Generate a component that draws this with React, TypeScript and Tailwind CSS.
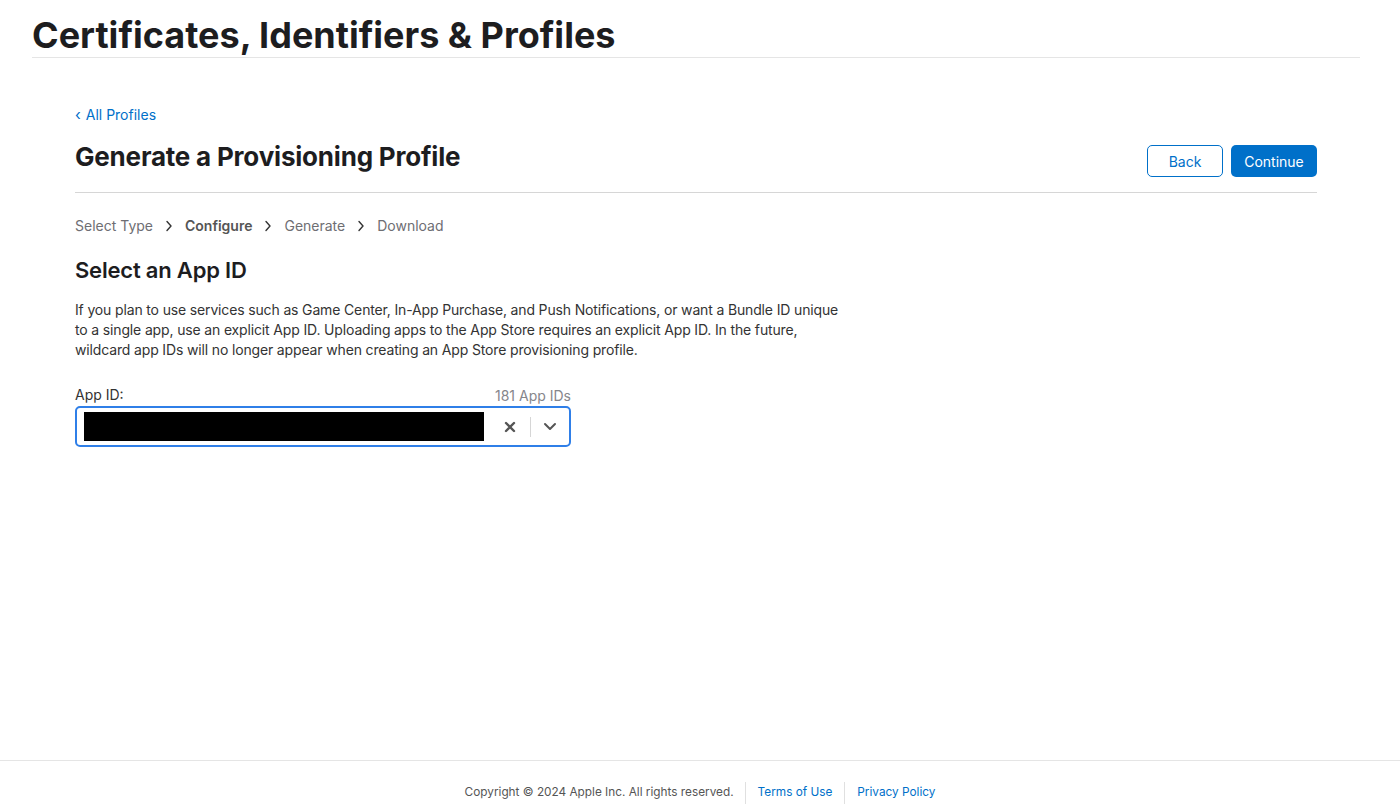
import React from 'react';

const steps = [
  { label: 'Select Type', active: false },
  { label: 'Configure', active: true },
  { label: 'Generate', active: false },
  { label: 'Download', active: false },
];

const Chevron = () => (
  <svg width="8" height="12" viewBox="0 0 8 12" className="mx-[12px] text-[#333]">
    <path d="M2 1.5 L6 6 L2 10.5" fill="none" stroke="currentColor" strokeWidth="1.4" strokeLinecap="round" strokeLinejoin="round" />
  </svg>
);

export default function App() {
  return (
    <div className="min-h-[807px] flex flex-col bg-white text-[#1d1d1f]" style={{ fontFamily: 'Inter, "Helvetica Neue", Arial, sans-serif' }}>
      {/* Top header */}
      <div className="px-8">
        <h1 className="text-[36px] font-bold leading-none pt-[17px] pb-[4px] border-b border-[#e5e5e5] w-[1328px]">
          Certificates, Identifiers &amp; Profiles
        </h1>
      </div>

      {/* Main content */}
      <main className="flex-1 pl-[75px] pr-[83px] pt-[46px]">
        <a className="text-[14px] text-[#0070c9] flex items-center gap-[5px]">
          <span className="text-[15px] leading-none">‹</span>All Profiles
        </a>

        <div className="flex items-end justify-between mt-[16px] pb-[15px] border-b border-[#d6d6d6]">
          <h2 className="text-[26px] font-bold tracking-[-0.2px] leading-[32px] mb-[4px]">Generate a Provisioning Profile</h2>
          <div className="flex gap-2">
            <button className="h-[32px] w-[76px] rounded-[5px] border border-[#0070c9] text-[#0070c9] text-[14px]">Back</button>
            <button className="h-[32px] w-[86px] rounded-[5px] bg-[#0070c9] text-white text-[14px]">Continue</button>
          </div>
        </div>

        <div className="flex items-center mt-[22px] text-[14px] text-[#6e6e73]">
          {steps.map((s, i) => (
            <React.Fragment key={s.label}>
              {i > 0 && <Chevron />}
              <span className={s.active ? 'font-semibold text-[#555]' : ''}>{s.label}</span>
            </React.Fragment>
          ))}
        </div>

        <h3 className="text-[22px] font-semibold tracking-[-0.2px] mt-[18px]">Select an App ID</h3>

        <p className="text-[14px] leading-[20px] text-[#333] w-[772px] mt-[13px] tracking-[-0.15px]">
          If you plan to use services such as Game Center, In-App Purchase, and Push Notifications, or want a Bundle ID unique
          to a single app, use an explicit App ID. Uploading apps to the App Store requires an explicit App ID. In the future,
          wildcard app IDs will no longer appear when creating an App Store provisioning profile.
        </p>

        <div className="w-[496px] mt-[24px]">
          <div className="flex items-end justify-between text-[14px]">
            <span className="text-[#333]">App ID:</span>
            <span className="text-[#86868b] translate-y-[1px]">181 App IDs</span>
          </div>
          <div className="mt-[1px] h-[41px] rounded-[5px] border-2 border-[#2f7fe8] flex items-center pl-[7px]">
            <div className="w-[400px] h-[29px] bg-black" />
            <div className="flex-1 flex items-center justify-end h-full">
              <svg width="12" height="12" viewBox="0 0 12 12" className="mr-[14px]">
                <path d="M2 2 L10 10 M10 2 L2 10" stroke="#555" strokeWidth="2.4" strokeLinecap="round" />
              </svg>
              <div className="w-px h-[20px] bg-[#d6d6d6]" />
              <svg width="14" height="9" viewBox="0 0 14 9" className="ml-[12px] mr-[12px]">
                <path d="M2 2 L7 7 L12 2" fill="none" stroke="#555" strokeWidth="2" strokeLinecap="round" strokeLinejoin="round" />
              </svg>
            </div>
          </div>
        </div>
      </main>

      {/* Footer */}
      <footer className="border-t border-[#e5e5e5] h-[47px] flex items-center justify-center text-[11.8px]">
        <span className="text-[#555] pr-[11px] mt-[18px]">Copyright © 2024 Apple Inc. All rights reserved.</span>
        <div className="flex items-center h-[22px] border-l border-[#e0e0e0] mt-[18px] px-[12px]">
          <a className="text-[#0070c9]">Terms of Use</a>
        </div>
        <div className="flex items-center h-[22px] border-l border-[#e0e0e0] mt-[18px] pl-[12px]">
          <a className="text-[#0070c9]">Privacy Policy</a>
        </div>
      </footer>
    </div>
  );
}
